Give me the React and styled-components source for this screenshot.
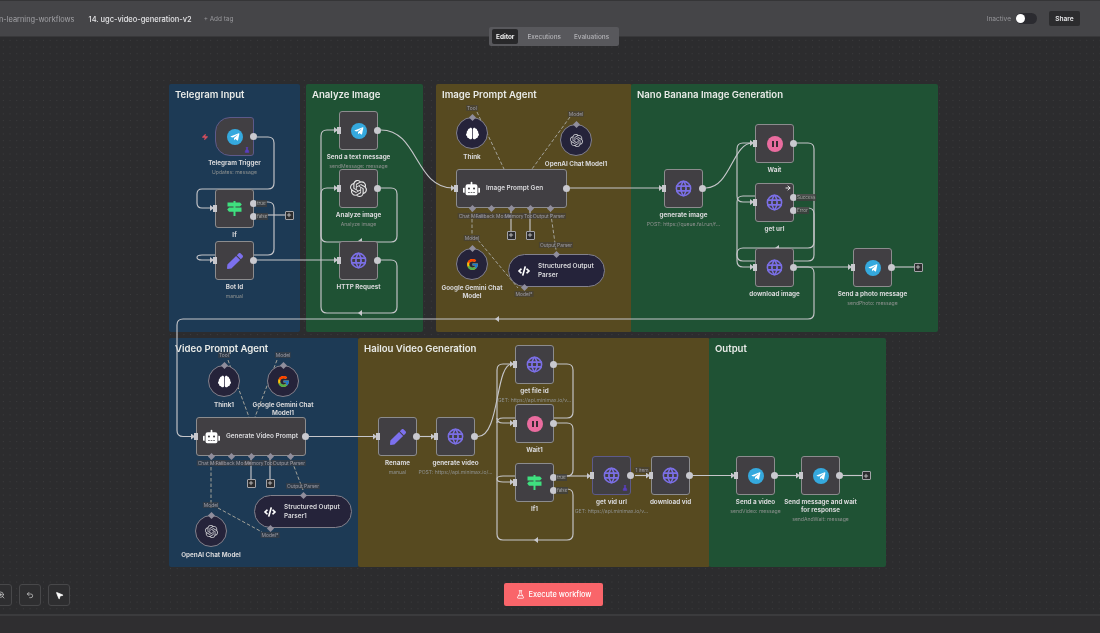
import styled, { createGlobalStyle } from "styled-components";
import { Plus, FlaskConical, Undo2, MousePointer2, ZoomIn, ArrowRight, Zap } from "lucide-react";
import { FaTelegramPlane, FaRobot, FaBrain, FaPen, FaCode } from "react-icons/fa";
import { FcGoogle } from "react-icons/fc";
import { SiOpenai } from "react-icons/si";
import { TbWorld } from "react-icons/tb";

const TOP = 37;

const GlobalStyle = createGlobalStyle`
  html, body, #root { margin: 0; height: 100%; background: #2f2e30; overflow: hidden; }
  * { box-sizing: border-box; }
`;

const Page = styled.div`
  display: flex;
  flex-direction: column;
  width: 1100px;
  height: 633px;
  font-family: Inter, "Liberation Sans", sans-serif;
  filter: blur(0.45px);
  overflow: hidden;
`;

const TopBar = styled.header`
  position: relative;
  display: flex;
  align-items: center;
  height: 37px;
  flex: none;
  padding: 1px 20px 0 0;
  background: #454548;
  border-top: 1px solid #353537;
  border-bottom: 1px solid #38383a;
  z-index: 5;
`;

const Folder = styled.span`
  margin-left: -1px;
  font-size: 7.4px;
  color: #a2a2a6;
`;

const Title = styled.span`
  margin-left: 14px;
  font-size: 7.5px;
  font-weight: 500;
  color: #e4e4e6;
`;

const AddTag = styled.span`
  margin-left: 12px;
  font-size: 6.4px;
  color: #98989c;
`;

const Right = styled.div`
  display: flex;
  align-items: center;
  margin: -1px 0 0 auto;
`;

const Status = styled.span`
  font-size: 6.6px;
  color: #96969a;
`;

const Toggle = styled.div`
  display: flex;
  align-items: center;
  width: 21px;
  height: 11px;
  margin-left: 5px;
  border-radius: 6px;
  background: #2b2b30;
  &::before {
    content: "";
    width: 9px;
    height: 9px;
    border-radius: 50%;
    background: #fff;
  }
`;

const Share = styled.button`
  margin-left: 12px;
  width: 31px;
  height: 15px;
  padding: 0;
  border: 0;
  border-radius: 2px;
  background: #2c2c2e;
  color: #e6e6e8;
  font: 600 6.6px Inter, sans-serif;
`;

const Tabs = styled.nav`
  position: absolute;
  left: 489px;
  top: 26px;
  display: flex;
  align-items: center;
  gap: 5px;
  width: 130px;
  height: 19px;
  padding: 0 3px;
  background: #58585c;
  border-radius: 2px;
`;

const Tab = styled.span`
  padding: 3.5px 4px;
  border-radius: 2px;
  font-size: 6.4px;
  font-weight: ${(p) => (p.$on ? 700 : 500)};
  color: ${(p) => (p.$on ? "#f2f2f2" : "#b4b4b8")};
  background: ${(p) => (p.$on ? "#28282a" : "transparent")};
`;

const Canvas = styled.main`
  position: relative;
  flex: 1;
  background-color: #2c2c2e;
  background-image: radial-gradient(circle, #3d3d3f 0.65px, transparent 0.9px);
  background-size: 6.7px 6.7px;
  overflow: hidden;
`;

const StatusStrip = styled.footer`
  flex: none;
  height: 19px;
  background: #2f2e30;
  border-top: 2px solid #3b3b3d;
`;

// items on the free canvas keep their place as reference coordinates
const Placed = styled.div.attrs(({ $x, $y, $w, $h }) => ({
  style: { left: $x, top: $y - TOP, width: $w, height: $h },
}))`
  position: absolute;
`;

const tones = { blue: "#1d3a55", green: "#1f5234", olive: "#574a20" };

const Group = styled(Placed)`
  padding: 5px 6px;
  border-radius: 2px;
  background: ${(p) => tones[p.$tone]};
  font-size: 9.6px;
  font-weight: 600;
  color: #e9ebe8;
`;

const Edges = styled.svg`
  position: absolute;
  left: 0;
  top: 0;
  width: 1100px;
  height: 577px;
  fill: none;
`;

const radius = { square: "3px", wide: "3px", trigger: "15px 3px 3px 15px", circle: "50%", pill: "17px" };

const NodeBox = styled(Placed)`
  display: flex;
  align-items: center;
  justify-content: ${(p) => (p.$kind === "wide" || p.$kind === "pill" ? "flex-start" : "center")};
  gap: ${(p) => (p.$kind === "pill" ? "8px" : "6px")};
  padding-left: ${(p) => (p.$kind === "wide" ? "6px" : p.$kind === "pill" ? "9px" : "0")};
  border: 1px solid ${(p) => (p.$live ? "#5d5a8a" : p.$kind === "circle" || p.$kind === "pill" ? "#83818c" : "#8c8c8e")};
  border-radius: ${(p) => radius[p.$kind]};
  background: ${(p) => (p.$kind === "circle" || p.$kind === "pill" ? "#25233a" : "#413f43")};
`;

const InnerLabel = styled.span`
  font-size: 6.4px;
  font-weight: 600;
  line-height: 8.2px;
  color: #d9d9dc;
  white-space: pre-line;
`;

const Caption = styled.div`
  position: absolute;
  top: 100%;
  left: 50%;
  width: 76px;
  margin-top: ${(p) => (p.$round ? "4.5px" : "4px")};
  transform: translateX(-50%);
  display: flex;
  flex-direction: column;
  align-items: center;
  text-align: center;
`;

const Label = styled.div`
  font-size: 6.3px;
  font-weight: 700;
  line-height: 8.2px;
  color: #d8d8da;
`;

const Sub = styled.div`
  margin-top: 2px;
  font-size: 5.1px;
  line-height: 7px;
  color: #8f9290;
  white-space: nowrap;
`;

const InPort = styled.span`
  position: absolute;
  left: -3px;
  top: 50%;
  width: 4px;
  height: 7px;
  margin-top: -3.5px;
  background: #c8c8cd;
`;

const OutPort = styled.span`
  position: absolute;
  right: -4px;
  top: ${(p) => p.$at}px;
  width: 7px;
  height: 7px;
  margin-top: -3.5px;
  border-radius: 50%;
  background: #c9c9cf;
`;

const OutTag = styled.span`
  position: absolute;
  left: 6px;
  top: 0;
  padding: 0 1px;
  font-size: 4.6px;
  line-height: 7px;
  color: #a9a9a9;
  background: rgba(62, 62, 62, 0.8);
`;

const Diamond = styled(Placed)`
  width: 5px;
  height: 5px;
  margin: -2.5px 0 0 -2.5px;
  background: #908e9c;
  transform: rotate(45deg);
`;

const PortTag = styled(Placed)`
  transform: translate(-50%, -50%);
  padding: 0 1px;
  font-size: 4.9px;
  line-height: 6px;
  white-space: nowrap;
  color: #9d9ca6;
  background: rgba(64, 62, 64, 0.55);
`;

const AddBox = styled(Placed)`
  display: flex;
  align-items: center;
  justify-content: center;
  width: 9px;
  height: 9px;
  margin: -4.5px 0 0 -4.5px;
  border: 1px solid #a4a4a8;
  border-radius: 1px;
  background: #2a2a2c;
  color: #d8d8d8;
`;

const Badge = styled(Placed)`
  display: flex;
  color: ${(p) => p.$color};
  transform: translate(-50%, -50%);
`;

const Disc = styled.span`
  display: flex;
  align-items: center;
  justify-content: center;
  width: 16px;
  height: 16px;
  flex: none;
  border-radius: 50%;
  background: ${(p) => p.$color};
  color: ${(p) => p.$ink};
`;

const PauseBars = styled.span`
  width: 6px;
  height: 6px;
  border-left: 2px solid #3b2a33;
  border-right: 2px solid #3b2a33;
`;

const ToolButton = styled.button`
  position: absolute;
  left: ${(p) => p.$x}px;
  top: 547px;
  display: flex;
  align-items: center;
  justify-content: center;
  width: 22px;
  height: 22px;
  padding: 0;
  border: 1px solid #48484a;
  border-radius: 3px;
  background: #2e2e30;
  color: #dadada;
`;

const ExecuteButton = styled.button`
  position: absolute;
  left: 504px;
  top: 546px;
  display: flex;
  align-items: center;
  justify-content: center;
  gap: 4px;
  width: 99px;
  height: 23px;
  padding: 0;
  border: 0;
  border-radius: 2px;
  background: #f9656a;
  color: #fff;
  font: 500 7.4px Inter, sans-serif;
`;

const Telegram = () => (
  <Disc $color="#35a9de" $ink="#fff">
    <FaTelegramPlane size={10} />
  </Disc>
);
const Globe = () => <TbWorld size={19} color="#7b6fe6" />;
const Pause = () => (
  <Disc $color="#ea6c9f">
    <PauseBars />
  </Disc>
);
const Pencil = () => <FaPen size={16} color="#7c70ee" />;
const Sign = () => (
  <svg width="17" height="17" viewBox="0 0 17 17" fill="#3fe07f">
    <path d="M7.5 1h2v15h-2z" />
    <path d="M1.5 2.5h12.5l1.8 2-1.8 2H1.5z" />
    <path d="M3 7.5h12.5v4.2H3l-1.8-2.1z" />
  </svg>
);

const icons = {
  telegram: <Telegram />,
  globe: <Globe />,
  pause: <Pause />,
  pencil: <Pencil />,
  sign: <Sign />,
  openai: <SiOpenai size={17} color="#e8e8e8" />,
  openaiDim: <SiOpenai size={13} color="#c8c8cc" />,
  brain: <FaBrain size={13} color="#fff" />,
  google: <FcGoogle size={13} />,
  robot: <FaRobot size={17} color="#fff" />,
  code: <FaCode size={12} color="#fff" />,
};

const sq = (x, y, icon, label, sub, extra) => ({ kind: "square", x, y, w: 39, h: 39, icon, label, sub, ports: "both", ...extra });
const ci = (cx, cy, icon, label) => ({ kind: "circle", x: cx - 16, y: cy - 16, w: 32, h: 32, icon, label });

const nodes = [
  { ...sq(215, 117, "telegram", "Telegram Trigger", "Updates: message"), kind: "trigger", ports: "out", live: true },
  sq(215, 189, "sign", "If", null, { outs: [{ at: 13, tag: "true" }, { at: 26, tag: "false" }] }),
  sq(215, 241, "pencil", "Bot Id", "manual"),
  sq(339, 111, "telegram", "Send a text message", "sendMessage: message"),
  sq(339, 169, "openai", "Analyze image", "Analyze image"),
  sq(339, 241, "globe", "HTTP Request"),
  ci(472, 133, "brain", "Think"),
  ci(576, 140, "openaiDim", "OpenAI Chat Model1"),
  { kind: "wide", x: 456, y: 169, w: 111, h: 39, icon: "robot", inner: "Image Prompt Gen", ports: "both" },
  ci(472, 264, "google", "Google Gemini Chat Model"),
  { kind: "pill", x: 508, y: 254, w: 97, h: 33, icon: "code", inner: "Structured Output\nParser" },
  sq(664, 169, "globe", "generate image", "POST: https://queue.fal.run/f..."),
  sq(755, 124, "pause", "Wait"),
  sq(755, 183, "globe", "get url", null, { outs: [{ at: 13, tag: "Success" }, { at: 26, tag: "Error" }] }),
  sq(755, 248, "globe", "download image"),
  sq(853, 248, "telegram", "Send a photo message", "sendPhoto: message"),
  ci(224, 381, "brain", "Think1"),
  ci(283, 381, "google", "Google Gemini Chat Model1"),
  { kind: "wide", x: 196, y: 417, w: 110, h: 39, icon: "robot", inner: "Generate Video Prompt", ports: "both" },
  { kind: "pill", x: 254, y: 495, w: 98, h: 33, icon: "code", inner: "Structured Output\nParser1" },
  ci(211, 531, "openaiDim", "OpenAI Chat Model"),
  sq(378, 417, "pencil", "Rename", "manual"),
  sq(436, 417, "globe", "generate video", "POST: https://api.minimax.io/..."),
  sq(515, 345, "globe", "get file id", "GET: https://api.minimax.io/v..."),
  sq(515, 404, "pause", "Wait1"),
  sq(515, 463, "sign", "If1", null, { outs: [{ at: 13, tag: "true" }, { at: 26, tag: "false" }] }),
  sq(592, 456, "globe", "get vid url", "GET: https://api.minimax.io/v...", { live: true }),
  sq(651, 456, "globe", "download vid"),
  sq(736, 456, "telegram", "Send a video", "sendVideo: message"),
  sq(801, 456, "telegram", "Send message and wait for response", "sendAndWait: message"),
];

const groups = [
  { x: 169, y: 84, w: 131, h: 248, tone: "blue", title: "Telegram Input" },
  { x: 306, y: 84, w: 117, h: 248, tone: "green", title: "Analyze Image" },
  { x: 436, y: 84, w: 196, h: 248, tone: "olive", title: "Image Prompt Agent" },
  { x: 631, y: 84, w: 307, h: 248, tone: "green", title: "Nano Banana Image Generation" },
  { x: 169, y: 338, w: 190, h: 229, tone: "blue", title: "Video Prompt Agent" },
  { x: 358, y: 338, w: 352, h: 229, tone: "olive", title: "Hailou Video Generation" },
  { x: 709, y: 338, w: 177, h: 229, tone: "green", title: "Output" },
];

// connections that end on an input, so they get an arrow head
const arrows = [
  "M257 137H268Q274 137 274 143V183Q274 189 268 189H202Q197 189 197 194V203Q197 208 202 208H212",
  "M257 202H268Q274 202 274 208V249Q274 255 268 255H202Q197 255 197 257.5Q197 260 202 260H212",
  "M257 260H336",
  "M381 260H391Q397 260 397 266V307Q397 313 391 313H327Q321 313 321 307V136Q321 130 327 130H336",
  "M381 188H391Q397 188 397 194V236Q397 242 391 242H327Q321 242 321 236V194Q321 188 327 188H336",
  "M381 130C418 130 415 188 453 188",
  "M570 188H661",
  "M706 188C730 188 733 143 752 143",
  "M737 196Q737 202 743 202H752",
  "M797 208H808Q814 208 814 214V242Q814 248 808 248H743Q737 248 737 254V261Q737 267 743 267H752",
  "M797 267H850",
  "M797 267H808Q814 267 814 273V313Q814 319 808 319H183Q177 319 177 325V430.5Q177 436.5 183 436.5H193",
  "M309 436.5H375",
  "M420 436.5H433",
  "M478 436.5C500 436.5 495 364 512 364",
  "M497 418Q497 423 503 423H512",
  "M557 423H567Q573 423 573 429V470Q573 476 567 476H503Q497 476 497 479Q497 482 503 482H512",
  "M557 476H589",
  "M635 475.5H648",
  "M693 475.5H733",
  "M778 475.5H798",
];

const lines = [
  "M752 143H743Q737 143 737 149V196",
  "M797 143H808Q814 143 814 149V255Q814 261 808 261H743Q737 261 737 255V202Q737 196 743 196H755",
  "M797 195H814",
  "M512 364H503Q497 364 497 370V534Q497 540 503 540H567Q573 540 573 534V495Q573 489 567 489H557",
  "M557 364H567Q573 364 573 370V412Q573 418 567 418H503Q497 418 497 423",
];

const stubs = [
  "M257 215H285",
  "M895 267H914",
  "M843 475.5H862",
  "M511 208V231",
  "M530 208V231",
  "M251 456V479",
  "M270 456V479",
];

const dashes = [
  "M477 112L504 169",
  "M570 117L532 169",
  "M472 208V240",
  "M478 240L518 288",
  "M550 208L556 250",
  "M228 360L249 417",
  "M277 360L255 417",
  "M211 456V508",
  "M218 508L262 532",
  "M290 456L303 490",
];

const backArrows = [[360, 313], [497, 319], [536, 540], [360, 241], [777, 248]];

const diamonds = [
  [472, 117], [576, 124], [472, 248], [556, 254], [524, 287],
  [472, 208], [491, 208], [511, 208], [530, 208], [550, 208],
  [224, 365], [283, 365], [303, 495], [270, 528], [211, 515],
  [211, 456], [231, 456], [251, 456], [270, 456], [290, 456],
];

const tags = [
  [472, 108, "Tool"], [576, 114, "Model"], [472, 238, "Model"], [556, 245, "Output Parser"], [524, 294, "Model*"],
  [472, 216, "Chat Model"], [493, 216, "Fallback Model"], [514, 216, "Memory"], [529, 216, "Tool"], [549, 216, "Output Parser"],
  [224, 355, "Tool"], [283, 355, "Model"], [303, 486, "Output Parser"], [270, 535, "Model*"], [211, 505, "Model"],
  [211, 463, "Chat Model"], [233, 463, "Fallback Model"], [254, 463, "Memory"], [269, 463, "Tool"], [289, 463, "Output Parser"],
  [642, 470, "1 item"],
];

const addBoxes = [[289, 215], [918, 267], [511, 235], [530, 235], [251, 483], [270, 483], [866, 475.5]];

function CanvasNode({ n }) {
  const outs = n.outs || (n.ports === "both" || n.ports === "out" ? [{ at: n.h / 2 - 1 }] : []);
  return (
    <NodeBox $x={n.x} $y={n.y} $w={n.w} $h={n.h} $kind={n.kind} $live={n.live}>
      {icons[n.icon]}
      {n.inner && <InnerLabel>{n.inner}</InnerLabel>}
      {n.ports === "both" && <InPort />}
      {outs.map((o) => (
        <OutPort key={o.at} $at={o.at}>
          {o.tag && <OutTag>{o.tag}</OutTag>}
        </OutPort>
      ))}
      {n.label && (
        <Caption $round={n.kind === "circle"}>
          <Label>{n.label}</Label>
          {n.sub && <Sub>{n.sub}</Sub>}
        </Caption>
      )}
    </NodeBox>
  );
}

export default function App() {
  return (
    <Page>
      <GlobalStyle />
      <TopBar>
        <Folder>n-learning-workflows</Folder>
        <Title>14. ugc-video-generation-v2</Title>
        <AddTag>+ Add tag</AddTag>
        <Right>
          <Status>Inactive</Status>
          <Toggle />
          <Share>Share</Share>
        </Right>
        <Tabs>
          <Tab $on>Editor</Tab>
          <Tab>Executions</Tab>
          <Tab>Evaluations</Tab>
        </Tabs>
      </TopBar>
      <Canvas>
        {groups.map((g) => (
          <Group key={g.title} $x={g.x} $y={g.y} $w={g.w} $h={g.h} $tone={g.tone}>
            {g.title}
          </Group>
        ))}
        <Edges viewBox={`0 ${TOP} 1100 577`}>
          <defs>
            <marker id="head" markerWidth="5" markerHeight="6" refX="2" refY="3" orient="auto" markerUnits="userSpaceOnUse">
              <path d="M0 0L4 3L0 6z" fill="#c8c8cd" />
            </marker>
          </defs>
          <g stroke="#c6c6ca" strokeWidth="1.15">
            {lines.concat(stubs).map((d) => (
              <path key={d} d={d} />
            ))}
            {arrows.map((d) => (
              <path key={d} d={d} markerEnd="url(#head)" />
            ))}
          </g>
          <g stroke="#a3a29a" strokeWidth="1" strokeDasharray="3.5 2">
            {dashes.map((d) => (
              <path key={d} d={d} />
            ))}
          </g>
          <g fill="#c8c8cd">
            {backArrows.map(([x, y]) => (
              <path key={x + "-" + y} d={`M${x - 2} ${y}l4 -3v6z`} />
            ))}
          </g>
        </Edges>
        {nodes.map((n) => (
          <CanvasNode key={n.label || n.inner} n={n} />
        ))}
        {tags.map(([x, y, t]) => (
          <PortTag key={x + t} $x={x} $y={y}>
            {t}
          </PortTag>
        ))}
        {diamonds.map(([x, y]) => (
          <Diamond key={x + "-" + y} $x={x} $y={y} />
        ))}
        {addBoxes.map(([x, y]) => (
          <AddBox key={x + "-" + y} $x={x} $y={y}>
            <Plus size={6} strokeWidth={3} />
          </AddBox>
        ))}
        <Badge $x={205} $y={137} $color="#d8505f">
          <Zap size={7} fill="#d8505f" />
        </Badge>
        <Badge $x={247} $y={150} $color="#5a3fc0">
          <FlaskConical size={6} fill="#5a3fc0" />
        </Badge>
        <Badge $x={625} $y={488} $color="#5a3fc0">
          <FlaskConical size={6} fill="#5a3fc0" />
        </Badge>
        <Badge $x={788} $y={188} $color="#ffffff">
          <ArrowRight size={7} strokeWidth={3} />
        </Badge>
        <ToolButton $x={-10}>
          <ZoomIn size={8} />
        </ToolButton>
        <ToolButton $x={19}>
          <Undo2 size={8} />
        </ToolButton>
        <ToolButton $x={48}>
          <MousePointer2 size={9} fill="#fff" color="#fff" />
        </ToolButton>
        <ExecuteButton>
          <FlaskConical size={9} />
          Execute workflow
        </ExecuteButton>
      </Canvas>
      <StatusStrip />
    </Page>
  );
}
